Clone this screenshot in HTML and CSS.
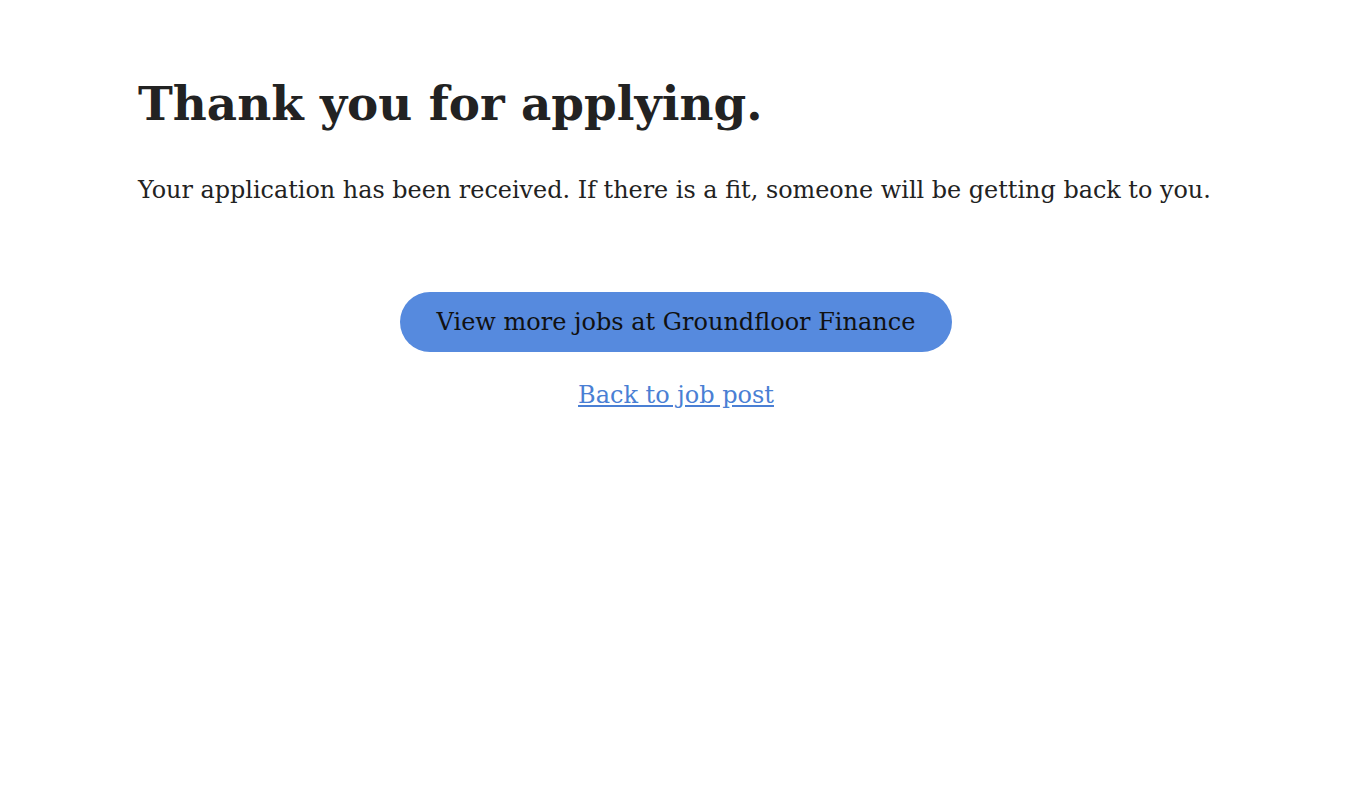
FILE: index.html
```html
<!DOCTYPE html>
<html lang="en">
<head>
<meta charset="utf-8">
<title>Thank you for applying</title>
<link rel="stylesheet" href="styles.css">
</head>
<body>
<main class="page">
  <h1 class="title">Thank you for applying.</h1>
  <p class="message">Your application has been received. If there is a fit, someone will be getting back to you.</p>
  <div class="actions">
    <a class="btn" href="#">View more jobs at Groundfloor Finance</a>
    <a class="back" href="#">Back to job post</a>
  </div>
</main>
</body>
</html>
```

FILE: styles.css
```css
html, body {
  margin: 0;
  padding: 0;
  background: #ffffff;
}
body {
  font-family: "DejaVu Serif", "Liberation Serif", serif;
  color: #222222;
}
.page {
  width: 1076px;
  margin: 0 auto;
  padding-top: 72px;
}
.title {
  margin: 0;
  font-size: 46.8px;
  line-height: 64px;
  font-weight: bold;
  color: #222222;
}
.message {
  margin: 38px 0 0;
  font-size: 23.9px;
  line-height: 32px;
  color: #222222;
  white-space: nowrap;
}
.actions {
  display: flex;
  flex-direction: column;
  align-items: center;
  margin-top: 86px;
}
.btn {
  display: flex;
  align-items: center;
  justify-content: center;
  height: 60px;
  padding: 0 37px;
  border-radius: 30px;
  background: #568ade;
  color: #111111;
  font-size: 24px;
  text-decoration: none;
}
.back {
  margin-top: 27px;
  font-size: 24px;
  line-height: 32px;
  color: #4a7fd4;
  text-decoration: underline;
}
```
